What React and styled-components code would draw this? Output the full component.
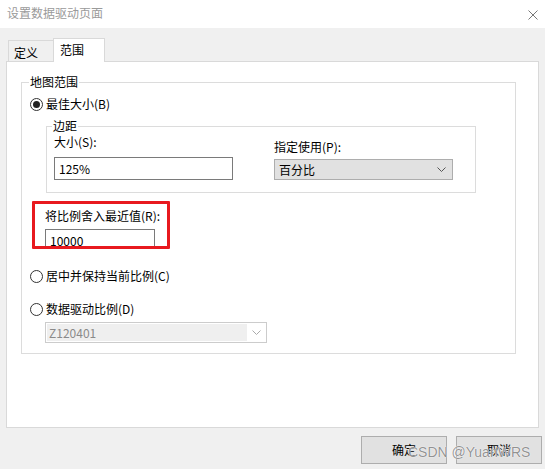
import React from "react";
import styled, { createGlobalStyle } from "styled-components";

const Global = createGlobalStyle`
  html, body { margin: 0; padding: 0; background: #f0f0f0; }
  body {
    font-family: "Microsoft YaHei UI", "Noto Sans CJK SC", "Noto Sans", sans-serif;
    font-size: 12px;
    line-height: 16px;
    color: #000;
  }
  * { box-sizing: border-box; }
`;

const Window = styled.div`
  position: relative;
  width: 545px;
  height: 469px;
  display: flex;
  flex-direction: column;
  background: #f0f0f0;
  overflow: hidden;
`;

const TitleBar = styled.div`
  height: 28px;
  background: #fff;
  display: flex;
  align-items: center;
  justify-content: space-between;
  padding: 0 7px 2px 7px;
  color: #9a9a9a;
`;

const CloseIcon = styled.svg`
  width: 10px;
  height: 10px;
  margin-top: 3px;
`;

const Body = styled.div`
  flex: 1;
  padding: 10px 6px 0 6px;
  display: flex;
  flex-direction: column;
`;

const TabStrip = styled.div`
  display: flex;
  align-items: flex-end;
  padding-left: 2px;
  margin-bottom: -1px;
  position: relative;
  z-index: 1;
`;

const Tab = styled.div`
  height: ${(p) => (p.$active ? 24 : 22)}px;
  width: ${(p) => (p.$active ? 52 : 46)}px;
  margin-left: ${(p) => (p.$active ? -1 : 0)}px;
  padding-left: ${(p) => (p.$active ? 6 : 5)}px;
  padding-top: ${(p) => (p.$active ? 3 : 4)}px;
  border: 1px solid #d9d9d9;
  border-bottom: ${(p) => (p.$active ? "none" : "1px solid #d9d9d9")};
  background: ${(p) => (p.$active ? "#fff" : "#f0f0f0")};
`;

const Panel = styled.div`
  width: 533px;
  height: 367px;
  background: #fff;
  border: 1px solid #d9d9d9;
  padding: 12px 0 0 14px;
`;

const Group = styled.fieldset`
  margin: ${(p) => p.$margin || 0};
  border: 1px solid #dcdcdc;
  width: ${(p) => p.$w}px;
  padding: ${(p) => p.$pad};
  min-width: 0;
`;

const Legend = styled.legend`
  padding: 0 1px;
  margin-left: ${(p) => p.$ml}px;
  line-height: 16px;
`;

const RadioRow = styled.label`
  display: flex;
  align-items: center;
  height: 16px;
  gap: 3px;
  margin-top: ${(p) => p.$mt || 0}px;
`;

const RadioCircle = styled.span`
  width: 13px;
  height: 13px;
  border-radius: 50%;
  border: 1px solid #333;
  display: flex;
  align-items: center;
  justify-content: center;
  background: #fff;
  &::after {
    content: "";
    width: 7px;
    height: 7px;
    border-radius: 50%;
    background: ${(p) => (p.$checked ? "#222" : "transparent")};
  }
`;

const Columns = styled.div`
  display: flex;
  align-items: flex-end;
  gap: 41px;
`;

const Column = styled.div`
  display: flex;
  flex-direction: column;
`;

const FieldLabel = styled.div`
  margin-bottom: ${(p) => p.$mb}px;
`;

const TextBox = styled.div`
  width: ${(p) => p.$w}px;
  height: 23px;
  border: 1px solid #7a7a7a;
  background: #fff;
  padding: 3px 0 0 4px;
  flex-shrink: 0;
`;

const Select = styled.div`
  width: 179px;
  height: 21px;
  border: 1px solid #adadad;
  background: #e1e1e1;
  display: flex;
  align-items: center;
  justify-content: space-between;
  padding: 0 6px 0 4px;
`;

const Chevron = styled.svg`
  width: 9px;
  height: 5px;
`;

const Highlight = styled.div`
  width: 138px;
  height: 48px;
  border: 3px solid #e8191f;
  border-radius: 1px;
  margin: 8px 0 0 2px;
  padding: 4px 0 0 10px;
  overflow: hidden;
  display: flex;
  flex-direction: column;
  gap: 5px;
`;

const Combo = styled.div`
  width: 222px;
  height: 21px;
  border: 1px solid #cccccc;
  background: #fff;
  margin: 5px 0 0 15px;
  display: flex;
  align-items: stretch;
  padding: 1px;
`;

const ComboField = styled.div`
  flex: 0 0 200px;
  background: #efefef;
  color: #8a8a8a;
  padding: 1px 0 0 2px;
`;

const ComboArrow = styled.div`
  flex: 1;
  display: flex;
  align-items: center;
  justify-content: center;
`;

const Footer = styled.div`
  display: flex;
  justify-content: flex-end;
  gap: 9px;
  margin: 8px -3px 0 0;
`;

const Button = styled.div`
  width: 86px;
  height: 28px;
  border: 1px solid #adadad;
  background: #e1e1e1;
  display: flex;
  align-items: center;
  justify-content: center;
  padding-bottom: 1px;
`;

const Watermark = styled.div`
  position: absolute;
  left: 408px;
  top: 444px;
  font-family: "Liberation Sans", Arial, sans-serif;
  font-size: 14px;
  line-height: 16px;
  color: rgba(110, 110, 110, 0.75);
  text-shadow: 0 0 1px #fff, 0 0 1px #fff;
  pointer-events: none;
`;

export default function App() {
  return (
    <>
      <Global />
      <Window>
        <TitleBar>
          <span>设置数据驱动页面</span>
          <CloseIcon viewBox="0 0 10 10">
            <path d="M0.5 0.5 L9.5 9.5 M9.5 0.5 L0.5 9.5" stroke="#777" strokeWidth="1" fill="none" />
          </CloseIcon>
        </TitleBar>
        <Body>
          <TabStrip>
            <Tab>定义</Tab>
            <Tab $active>范围</Tab>
          </TabStrip>
          <Panel>
            <Group $w={495} $pad="6px 0 10px 8px">
              <Legend $ml={-1}>地图范围</Legend>
              <RadioRow>
                <RadioCircle $checked />
                <span>最佳大小(B)</span>
              </RadioRow>
              <Group $w={430} $pad="0 0 12px 7px" $margin="6px 0 0 16px">
                <Legend $ml={-2}>边距</Legend>
                <Columns>
                  <Column>
                    <FieldLabel $mb={7}>大小(S):</FieldLabel>
                    <TextBox $w={179}>125%</TextBox>
                  </Column>
                  <Column>
                    <FieldLabel $mb={4}>指定使用(P):</FieldLabel>
                    <Select>
                      <span>百分比</span>
                      <Chevron viewBox="0 0 9 5">
                        <path d="M0.5 0.5 L4.5 4.5 L8.5 0.5" stroke="#555" fill="none" />
                      </Chevron>
                    </Select>
                  </Column>
                </Columns>
              </Group>
              <Highlight>
                <div>将比例舍入最近值(R):</div>
                <TextBox $w={110}>10000</TextBox>
              </Highlight>
              <RadioRow $mt={19}>
                <RadioCircle />
                <span>居中并保持当前比例(C)</span>
              </RadioRow>
              <RadioRow $mt={17}>
                <RadioCircle />
                <span>数据驱动比例(D)</span>
              </RadioRow>
              <Combo>
                <ComboField>Z120401</ComboField>
                <ComboArrow>
                  <Chevron viewBox="0 0 9 5">
                    <path d="M0.5 0.5 L4.5 4.5 L8.5 0.5" stroke="#aaa" fill="none" />
                  </Chevron>
                </ComboArrow>
              </Combo>
            </Group>
          </Panel>
          <Footer>
            <Button>确定</Button>
            <Button>取消</Button>
          </Footer>
        </Body>
        <Watermark>CSDN @YuanWRS</Watermark>
      </Window>
    </>
  );
}
